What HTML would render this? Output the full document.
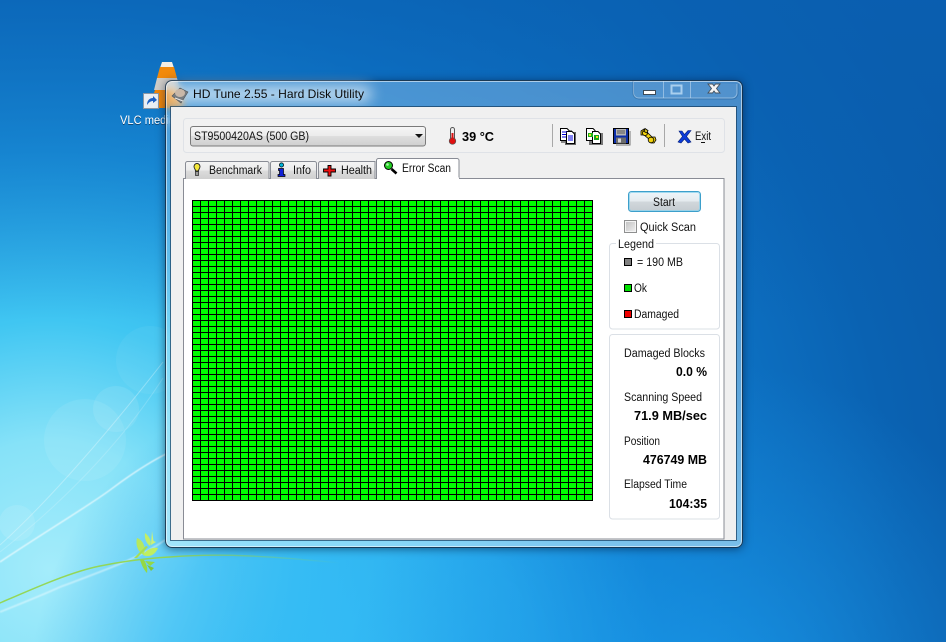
<!DOCTYPE html>
<html><head><meta charset="utf-8"><title>HD Tune 2.55</title>
<style>
html,body{margin:0;padding:0;width:946px;height:642px;overflow:hidden;background:#0e78cc}
svg{position:absolute;left:0;top:0;display:block}
#glass{position:absolute;left:165px;top:80px;width:576px;height:466px;border:1px solid rgba(10,35,60,.85);border-radius:7px;
background:linear-gradient(180deg,rgba(215,238,255,.3),rgba(215,240,255,.32) 40%,rgba(225,250,255,.5));
backdrop-filter:blur(4px);box-shadow:0 1px 9px rgba(0,20,50,.55),inset 0 0 0 1px rgba(255,255,255,.55)}
#grid{position:absolute;left:192px;top:200px;width:401px;height:301px;background-color:#00ff00;
background-image:linear-gradient(90deg,#000 1px,transparent 1px),linear-gradient(180deg,#000 1px,transparent 1px);
background-size:8px 6px;box-shadow:inset -1px -1px 0 #000}
text{font-family:"Liberation Sans",sans-serif;font-size:11.5px;fill:#111}
.b{font-weight:bold;font-size:13px;fill:#000}
</style></head><body>
<svg width="946" height="642" viewBox="0 0 946 642">
<defs>
<radialGradient id="bg" gradientUnits="userSpaceOnUse" cx="50" cy="570" r="1000">
<stop offset="0" stop-color="#a4ecfb"/><stop offset=".13" stop-color="#86e2f8"/><stop offset=".25" stop-color="#40c6f2"/>
<stop offset=".42" stop-color="#1e9ce4"/><stop offset=".6" stop-color="#0f7ccf"/><stop offset=".85" stop-color="#0a62b2"/><stop offset="1" stop-color="#0a5aa8"/>
</radialGradient>
<radialGradient id="br" gradientUnits="userSpaceOnUse" cx="350" cy="690" r="320">
<stop offset="0" stop-color="#34bcf6" stop-opacity=".95"/><stop offset=".6" stop-color="#30b6f4" stop-opacity=".6"/><stop offset="1" stop-color="#2aa8ee" stop-opacity="0"/>
</radialGradient>
<radialGradient id="br2" gradientUnits="userSpaceOnUse" cx="700" cy="720" r="360">
<stop offset="0" stop-color="#1a9cec" stop-opacity=".85"/><stop offset="1" stop-color="#1a90e0" stop-opacity="0"/>
</radialGradient>
<linearGradient id="top" x1="0" x2="0" y1="0" y2="1"><stop offset="0" stop-color="#0a60b2" stop-opacity=".75"/><stop offset="1" stop-color="#0a60b2" stop-opacity="0"/></linearGradient>
<linearGradient id="stem" gradientUnits="userSpaceOnUse" x1="170" x2="340" y1="0" y2="0"><stop offset="0" stop-color="#93d64e" stop-opacity=".9"/><stop offset="1" stop-color="#93d64e" stop-opacity="0"/></linearGradient>
<filter id="s2"><feGaussianBlur stdDeviation=".6"/></filter>
</defs>
<rect width="946" height="642" fill="url(#bg)"/>
<rect width="946" height="642" fill="url(#br)"/>
<rect width="946" height="642" fill="url(#br2)"/>
<rect width="946" height="320" fill="url(#top)"/>
<g fill="#fff">
<circle cx="85" cy="440" r="41" opacity=".08"/><circle cx="116" cy="409" r="23" opacity=".09"/><circle cx="17" cy="523" r="18" opacity=".1"/><circle cx="150" cy="360" r="34" opacity=".05"/>
</g>
<g fill="none" stroke="#fff">
<path d="M0 545 C50 500 110 430 163 362" stroke-width="1" opacity=".3"/>
<path d="M0 552 C60 505 120 445 163 378" stroke-width="1" opacity=".18"/>
<path d="M0 562 C40 535 90 505 110 490 C130 475 150 462 166 454" stroke-width="1.4" opacity=".7" filter="url(#s2)"/>
<path d="M0 612 C25 602 45 594 60 587 C100 572 140 558 165 540" stroke-width="2" opacity=".4" filter="url(#s2)"/>
</g>
<path d="M0 603 C30 590 70 572 100 566 C125 561 150 558 170 557" fill="none" stroke="#93d64e" stroke-width="1.5" opacity=".95"/>
<path d="M170 557 C220 553 270 556 340 563" fill="none" stroke="url(#stem)" stroke-width="1.4"/>
<g>
<path d="M137 538 C143 540 146 547 144 555 C139 553 135 546 137 538Z" fill="#b6e85e"/>
<path d="M145 533 C150 537 152 542 150 546 C147 544 144 539 145 533Z" fill="#c2ee66"/>
<path d="M152 531 L153.500 541 L156 542 L151 545Z" fill="#cdf274"/>
<path d="M143 555 C147 549 153 547 158 548 C155 555 149 558 143 555Z" fill="#c0ee60"/>
<path d="M140 560 C142 566 144 570 147 573 C148 568 146 563 144 560Z" fill="#94d844"/>
<path d="M145 561 L155 562 L150 566Z" fill="#94d844"/><path d="M147 565 L154 568 L151 571Z" fill="#7cc838"/>
<path d="M134 558 L146 546 L148 547 L137 558Z" fill="#a6de54"/>
</g>
<!-- VLC -->
<path d="M162 62 L172 62 L174 68 L160 68Z" fill="#f4eee4"/>
<path d="M160 67 L174 67 L177 78 L157 78Z" fill="#f28a0c"/>
<path d="M157 78 L177 78 L180 90 L154 90Z" fill="#d0cdc8"/>
<path d="M155 90 L180 90 L184 108 L149 108Z" fill="#f0860a"/>
<rect x="143.500" y="93.500" width="15" height="15" fill="#e8eef4" stroke="#8a97a5"/>
<path d="M147 105 C147 100 150 98 153 98 L153 96 L157 100 L153 103 L153 101 C151 101 149 102 147 105Z" fill="#1a5fc4"/>
<text x="120" y="125" style="fill:#103050" opacity=".75" textLength="55" lengthAdjust="spacingAndGlyphs">VLC media</text>
<text x="120" y="124" style="fill:#fff" textLength="55" lengthAdjust="spacingAndGlyphs">VLC media</text>
</svg>

<div id="glass"></div>

<svg width="946" height="642" viewBox="0 0 946 642">
<defs>
<filter id="g" x="-20%" y="-100%" width="140%" height="300%"><feGaussianBlur stdDeviation="7"/></filter>
<linearGradient id="cb" x1="0" x2="0" y1="0" y2="1"><stop offset="0" stop-color="#f6f6f6"/><stop offset=".5" stop-color="#ebebeb"/><stop offset=".5" stop-color="#dedede"/><stop offset="1" stop-color="#cfcfcf"/></linearGradient>
<linearGradient id="tab" x1="0" x2="0" y1="0" y2="1"><stop offset="0" stop-color="#f4f4f4"/><stop offset=".5" stop-color="#ebebeb"/><stop offset=".5" stop-color="#dddddd"/><stop offset="1" stop-color="#cfcfcf"/></linearGradient>
<linearGradient id="btn" x1="0" x2="0" y1="0" y2="1"><stop offset="0" stop-color="#eef6fb"/><stop offset=".5" stop-color="#e4eaee"/><stop offset=".5" stop-color="#d2d8dc"/><stop offset="1" stop-color="#c4cbd0"/></linearGradient>
<linearGradient id="chk" x1="0" x2="1" y1="0" y2="1"><stop offset="0" stop-color="#c4c4c4"/><stop offset="1" stop-color="#ececec"/></linearGradient>
</defs>

<!-- title -->
<rect x="172" y="86" width="200" height="16" rx="8" fill="#fff" opacity=".65" filter="url(#g)"/>
<text x="193" y="98" style="font-size:12px;fill:#0a0a0a" textLength="171" lengthAdjust="spacingAndGlyphs">HD Tune 2.55 - Hard Disk Utility</text>
<g>
<path d="M172 96 L180 88 L188 92 L181 103 Z" fill="#777c80" stroke="#50565a" stroke-width=".6"/>
<ellipse cx="180" cy="93" rx="5" ry="4" fill="#c9b8a8"/><path d="M175 98 L183 101" stroke="#e8e8e8" stroke-width="1.2"/>
</g>
<!-- caption buttons -->
<path d="M633.500 81 V93 a5 5 0 0 0 5 5 H732 a5 5 0 0 0 5 -5 V84" fill="#fff" fill-opacity=".06" stroke="#cfe4f6" stroke-opacity=".5"/>
<path d="M633 81 V93 a6 6 0 0 0 6 6 H732 a6 6 0 0 0 6 -6 V84" fill="none" stroke="#12406e" stroke-opacity=".3"/>
<path d="M663.500 81V98M690.500 81V98" stroke="#cfe4f6" stroke-opacity=".5"/>
<rect x="643.500" y="90.500" width="12" height="4" fill="#fff" stroke="#3c4a58"/>
<rect x="671.500" y="85.500" width="10" height="8" fill="none" stroke="#a9cfee" stroke-width="2"/>
<path d="M708 84 L712.500 84 L714 86 L715.500 84 L720 84 L716.500 88.500 L720 93 L715.500 93 L714 91 L712.500 93 L708 93 L711.500 88.500Z" fill="#f4f4f4" stroke="#46525e" stroke-width=".9"/>

<!-- client -->
<rect x="170.500" y="106.500" width="566" height="434" fill="none" stroke="#143a5c" stroke-opacity=".7"/>
<rect x="171" y="107" width="565" height="433" fill="#f0f0f0"/>
<rect x="183.500" y="118.500" width="541" height="34" rx="3" fill="#f1f1f1" stroke="#dfe2e7"/>

<!-- combo -->
<rect x="190.500" y="126.500" width="235" height="19.500" rx="2.500" fill="url(#cb)" stroke="#7a7a7a"/>
<text x="194" y="140" textLength="115" lengthAdjust="spacingAndGlyphs">ST9500420AS (500 GB)</text>
<path d="M415 134h8l-4 4z" fill="#111"/>

<!-- thermometer -->
<rect x="450.500" y="127.500" width="4" height="13" rx="2" fill="#eee" stroke="#555"/>
<circle cx="452.500" cy="141" r="3.300" fill="#e01010" stroke="#555" stroke-width=".7"/>
<rect x="451.500" y="133" width="2" height="7" fill="#d81010"/>
<text x="462" y="141" class="b" textLength="32" lengthAdjust="spacingAndGlyphs">39 °C</text>

<path d="M552.500 124V147M664.500 124V147" stroke="#a8a8a8"/>
<!-- copy icon -->
<g>
<rect x="561" y="130" width="11" height="13" fill="#888"/><rect x="565" y="132" width="11" height="13" fill="#666"/>
<path d="M560.500 128.500H567L569 130.500V140.500H560.500Z" fill="#fff" stroke="#000"/>
<path d="M566.500 131.500H572L574.500 134V143.500H566.500Z" fill="#fff" stroke="#000"/>
<path d="M562 132h5M562 134.500h4M562 137h4M568 136h5M568 138h5M568 140h5" stroke="#0000e0"/>
</g>
<!-- copy2 icon -->
<g>
<rect x="589" y="133" width="14" height="12" fill="#777"/>
<path d="M586.500 128.500H593L595 130.500V140.500H586.500Z" fill="#fff" stroke="#000"/>
<path d="M592.500 131.500H598L600.500 134V143.500H592.500Z" fill="#fff" stroke="#000"/>
<rect x="588" y="133" width="5" height="4" fill="#1cb01c"/><rect x="589" y="134" width="2" height="2" fill="#e8e020"/>
<rect x="594" y="135" width="5" height="5" fill="#18a818"/><rect x="596" y="136" width="2" height="2" fill="#f0e020"/>
</g>
<!-- floppy -->
<g>
<rect x="613.500" y="128.500" width="15" height="15" fill="#0c2ea8" stroke="#000"/>
<rect x="616" y="129" width="10" height="6.500" fill="#b6b6b6"/><rect x="617" y="130.500" width="8" height="1" fill="#555"/><rect x="617" y="132.500" width="8" height="1" fill="#555"/>
<rect x="616" y="137.500" width="10" height="6" fill="#6c6c6c"/>
<rect x="618" y="138.500" width="3" height="4" fill="#d6d6d6"/>
<path d="M630 131V145H616" stroke="#777" fill="none"/>
</g>
<!-- tools -->
<g stroke="#000" stroke-width=".8" fill="#f2d20c">
<path d="M641 131 L644 129 L646 131 L652 137 L655 137 L656 140 L654 143 L651 143 L650 140 L644 135 L641 135Z"/>
<circle cx="645" cy="133" r="2.600"/><circle cx="651" cy="140" r="2.800"/>
<path d="M645 128.500 L648 130.500 L647 133 L644 131.500Z" fill="#d8c020"/>
</g>
<!-- exit -->
<path d="M679 131 L682 131 L684.500 134.500 L688 130.500 L691 130.500 L686.500 136.500 L691 142 L688 143 L684.500 139 L681 143 L678 142 L682.500 136.500Z" fill="#0b3bd8" stroke="#06207a" stroke-width=".6"/>
<text x="695" y="140" textLength="16" lengthAdjust="spacingAndGlyphs">Exit</text>
<path d="M701 142.500h4" stroke="#111"/>

<!-- page -->
<rect x="183.500" y="178.500" width="540.500" height="360.500" fill="#fff" stroke="#898c95"/>
<!-- tabs -->
<path d="M185.500 179V163.500a2 2 0 0 1 2-2H267a2 2 0 0 1 2 2V179" fill="url(#tab)" stroke="#898c95"/>
<path d="M270.500 179V163.500a2 2 0 0 1 2-2H314.500a2 2 0 0 1 2 2V179" fill="url(#tab)" stroke="#898c95"/>
<path d="M318.500 179V163.500a2 2 0 0 1 2-2H375V179" fill="url(#tab)" stroke="#898c95"/>
<path d="M376.500 179V160.500a2 2 0 0 1 2-2H457a2 2 0 0 1 2 2V178.500" fill="#fff" stroke="#898c95"/>
<rect x="377" y="177.500" width="82" height="2" fill="#fff"/>
<text x="209" y="174" textLength="53" lengthAdjust="spacingAndGlyphs">Benchmark</text>
<text x="293" y="174" textLength="18" lengthAdjust="spacingAndGlyphs">Info</text>
<text x="341" y="174" textLength="31" lengthAdjust="spacingAndGlyphs">Health</text>
<text x="402" y="172" textLength="49" lengthAdjust="spacingAndGlyphs">Error Scan</text>
<!-- bulb -->
<path d="M197 163.500a3 3 0 0 1 3 3c0 2-1.500 2.500-1.500 4.500h-3c0-2-1.500-2.500-1.500-4.500a3 3 0 0 1 3-3Z" fill="#f5e83a" stroke="#222" stroke-width=".9"/>
<rect x="195.500" y="171.500" width="3" height="4" fill="#999" stroke="#222" stroke-width=".7"/>
<!-- info -->
<circle cx="281.500" cy="165" r="2.100" fill="#00b4d8" stroke="#000" stroke-width=".7"/>
<path d="M278.500 168.500H283.500V174.500H285V176.500H278V174.500H279.500V170.500H278.500Z" fill="#1020d8" stroke="#000" stroke-width=".7"/>
<!-- cross -->
<path d="M328 165.500H331V169H335.500V172H331V176H328V172H323.500V169H328Z" fill="#ee1010" stroke="#000" stroke-width=".9"/>
<!-- magnifier -->
<path d="M391.500 169 L396.500 173.500" stroke="#000" stroke-width="2.600"/>
<circle cx="388.500" cy="165.500" r="4" fill="#22cc22" stroke="#000" stroke-width="1"/>
<circle cx="387.500" cy="164.500" r="1.300" fill="#aaf5aa"/>

<!-- start -->
<rect x="628.500" y="191.500" width="72" height="20" rx="3" fill="url(#btn)" stroke="#3c9fcb"/>
<rect x="629.500" y="192.500" width="70" height="18" rx="2" fill="none" stroke="#8fd3ee" stroke-opacity=".8"/>
<text x="653" y="206" textLength="22" lengthAdjust="spacingAndGlyphs">Start</text>
<!-- checkbox -->
<rect x="624.500" y="220.500" width="12" height="12" fill="#f4f4f4" stroke="#8e8f8f"/>
<rect x="626" y="222" width="9" height="9" fill="url(#chk)"/>
<text x="640" y="231" textLength="56" lengthAdjust="spacingAndGlyphs">Quick Scan</text>

<!-- legend -->
<rect x="609.500" y="243.500" width="110" height="85.500" rx="3" fill="none" stroke="#dbe0e6"/>
<rect x="616" y="240" width="40" height="7" fill="#fff"/>
<text x="618" y="248" textLength="36" lengthAdjust="spacingAndGlyphs">Legend</text>
<rect x="624.500" y="258.500" width="7" height="7" fill="#808080" stroke="#000"/>
<text x="637" y="266" textLength="46" lengthAdjust="spacingAndGlyphs">= 190 MB</text>
<rect x="624.500" y="284.500" width="7" height="7" fill="#00e000" stroke="#000"/>
<text x="634" y="292" textLength="13" lengthAdjust="spacingAndGlyphs">Ok</text>
<rect x="624.500" y="310.500" width="7" height="7" fill="#f00000" stroke="#000"/>
<text x="634" y="318" textLength="45" lengthAdjust="spacingAndGlyphs">Damaged</text>

<!-- stats -->
<rect x="609.500" y="334.500" width="110" height="184.500" rx="3" fill="none" stroke="#dbe0e6"/>
<text x="624" y="357" textLength="81" lengthAdjust="spacingAndGlyphs">Damaged Blocks</text>
<text x="676" y="376" class="b" textLength="31" lengthAdjust="spacingAndGlyphs">0.0 %</text>
<text x="624" y="401" textLength="78" lengthAdjust="spacingAndGlyphs">Scanning Speed</text>
<text x="634" y="420" class="b" textLength="73" lengthAdjust="spacingAndGlyphs">71.9 MB/sec</text>
<text x="624" y="445" textLength="36" lengthAdjust="spacingAndGlyphs">Position</text>
<text x="643" y="464" class="b" textLength="64" lengthAdjust="spacingAndGlyphs">476749 MB</text>
<text x="624" y="488" textLength="63" lengthAdjust="spacingAndGlyphs">Elapsed Time</text>
<text x="669" y="508" class="b" textLength="38" lengthAdjust="spacingAndGlyphs">104:35</text>
</svg>
<div id="grid"></div>
</body></html>
